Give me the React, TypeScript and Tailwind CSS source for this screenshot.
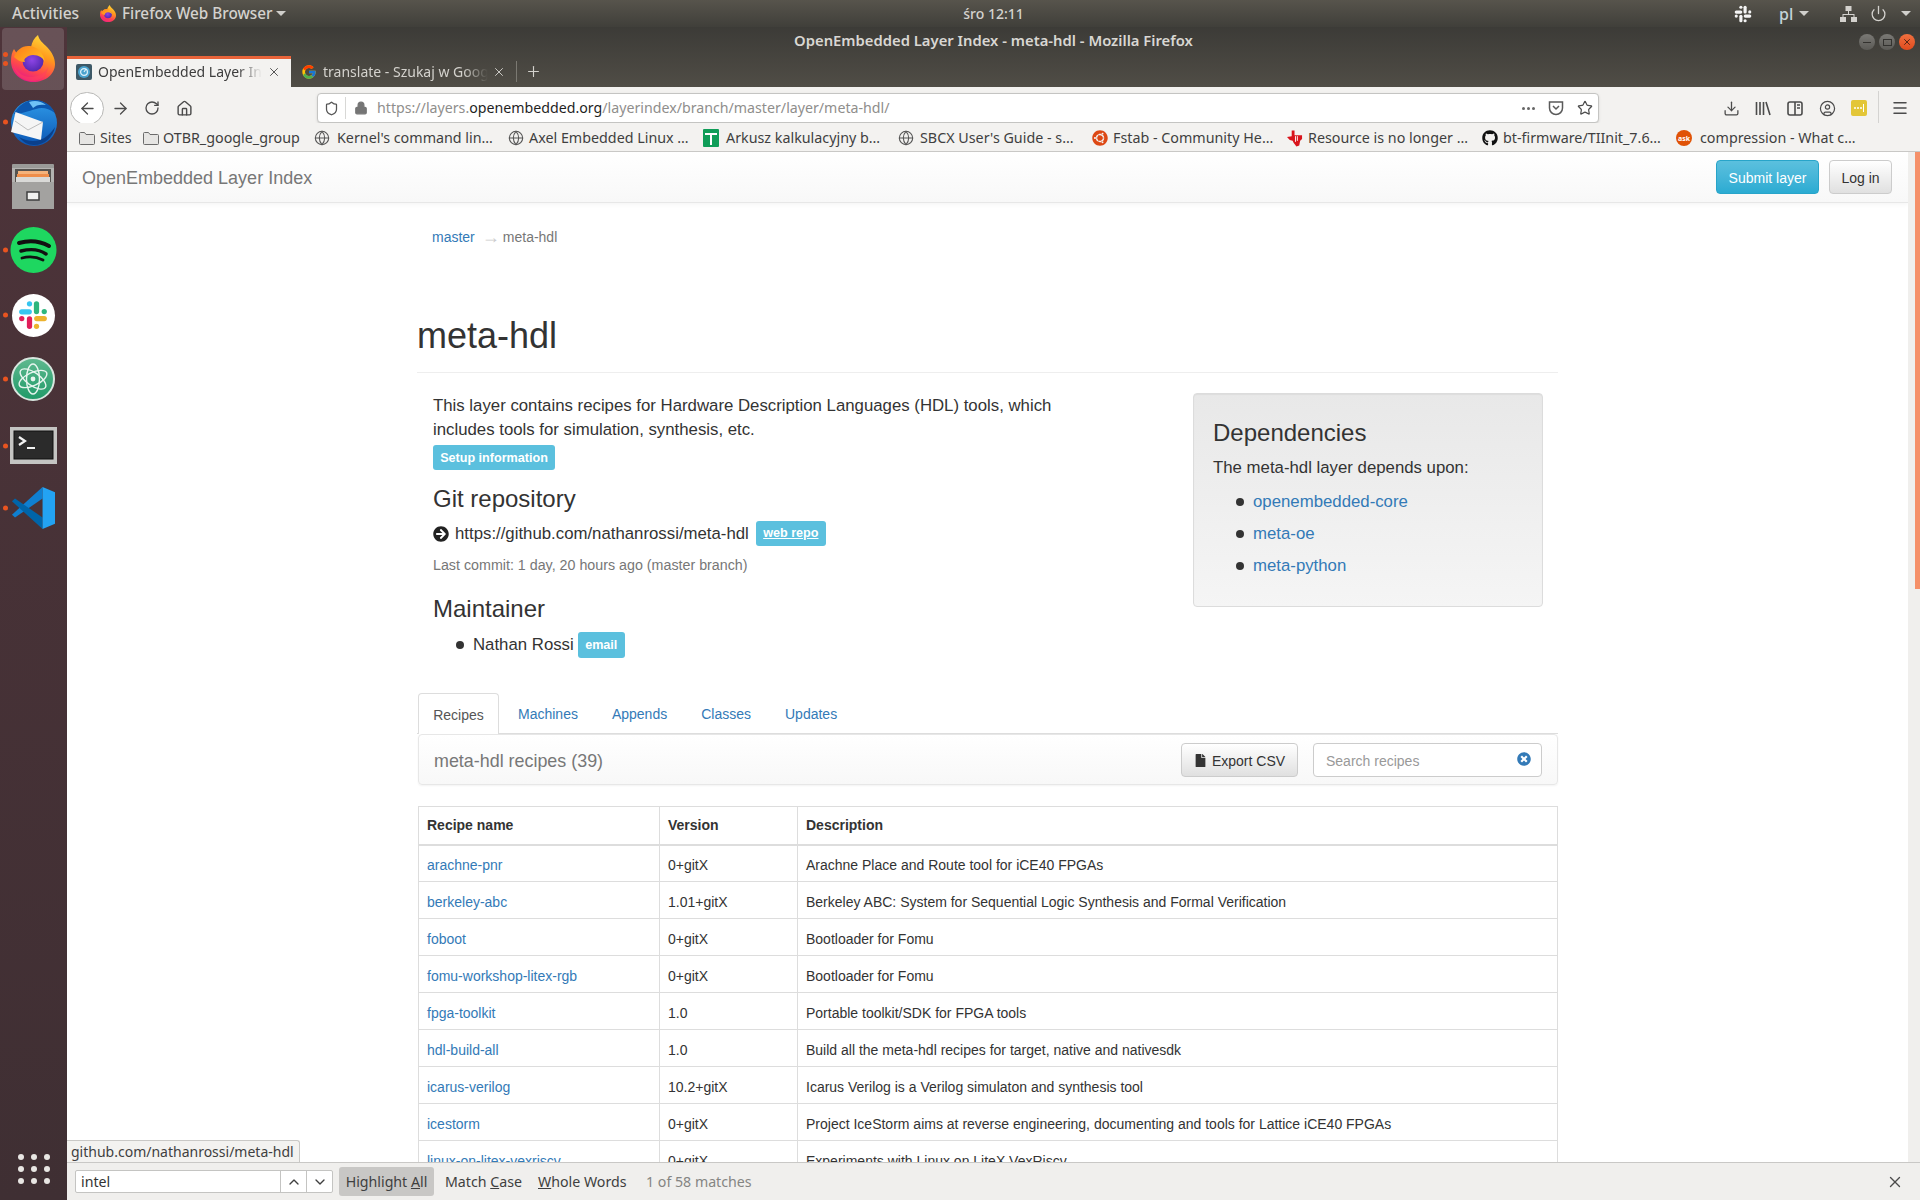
import React from "react";
import { ArrowLeft, ArrowRight, RotateCw, Home, Shield, Lock, Star, Download, Menu, X, Plus, Globe, ChevronUp, ChevronDown, Power, CircleUser } from "lucide-react";
import { FaGithub, FaUbuntu, FaArrowCircleRight, FaFile, FaTimesCircle } from "react-icons/fa";
import { FcGoogle } from "react-icons/fc";

const ui = "font-['Noto_Sans',sans-serif]";

function FirefoxLogo({ size }: { size: number }) {
  return (
    <svg width={size} height={size * 1.07} viewBox="0 0 44 47">
      <defs>
        <linearGradient id="ffa" x1="0.75" y1="0" x2="0.35" y2="1">
          <stop offset="0" stopColor="#ffdc3c" />
          <stop offset="0.4" stopColor="#ff9a1c" />
          <stop offset="0.72" stopColor="#ff4a4a" />
          <stop offset="1" stopColor="#e6178a" />
        </linearGradient>
        <radialGradient id="ffb" cx="0.45" cy="0.45" r="0.65">
          <stop offset="0" stopColor="#8e45e6" />
          <stop offset="1" stopColor="#4a24a8" />
        </radialGradient>
        <linearGradient id="ffc" x1="0" y1="0" x2="1" y2="0.6">
          <stop offset="0" stopColor="#ff7a1c" />
          <stop offset="1" stopColor="#ffb81f" />
        </linearGradient>
      </defs>
      <path d="M27 0c1 5 5 8 9 12 5 5 8 11 8 17 0 10-9 18-22 18C10 47 0 38 0 26c0-5 1-9 3-12 1 2 2 3 3 4 3-4 9-6 14-6 1-5 3-9 7-12z" fill="url(#ffa)" />
      <circle cx="22" cy="26" r="10.5" fill="url(#ffb)" />
      <path d="M3 22c2-7 9-12 16-11 7 1 13 6 15 16-2-4-6-7-12-7-3 0-5 1-6 2-3 2-3 3-2 5-4 0-8-2-11-5z" fill="url(#ffc)" />
      <path d="M2 27c2 9 9 15 18 15 8 0 14-4 17-10-1 9-8 14-16 14C10 46 3 38 2 27z" fill="#ff3f5f" opacity="0.55" />
    </svg>
  );
}

function Thunderbird() {
  return (
    <svg width="48" height="47" viewBox="0 0 48 47">
      <defs>
        <linearGradient id="tb" x1="0.5" y1="0" x2="0.5" y2="1">
          <stop offset="0" stopColor="#2f9ae8" />
          <stop offset="1" stopColor="#0a55b4" />
        </linearGradient>
      </defs>
      <circle cx="25" cy="24" r="23" fill="url(#tb)" />
      <path d="M5 15C9 6 18 0 28 1c8 1 15 6 18 13-7-5-13-6-19-4-8 2-15 5-22 5z" fill="#0c57ae" />
      <path d="M20 3c6-2 12-1 17 3-6-1-10 0-13 3-1-2-3-4-4-6z" fill="#6fc2f6" />
      <polygon points="6.5,13 34,23 32,41 2,33" fill="#f5f5f5" />
      <path d="M6 22l13 9 15-8" fill="none" stroke="#bdbdbd" strokeWidth="1" />
      <path d="M10 38c7 4 14 5 21 3 6-2 11-7 15-13-2 10-10 18-21 18-6 0-11-3-15-8z" fill="#0a3f8a" />
    </svg>
  );
}

function FilesIcon() {
  return (
    <svg width="44" height="46" viewBox="0 0 44 46">
      <rect x="1" y="1" width="42" height="6" rx="1" fill="#9a9a98" />
      <rect x="1" y="5" width="42" height="41" fill="#b4b3b1" />
      <rect x="4" y="6" width="36" height="13" fill="#55524f" />
      <rect x="7" y="8" width="30" height="3" fill="#f4b27b" />
      <rect x="6" y="11" width="32" height="3" fill="#ee8d4a" />
      <rect x="5" y="14" width="34" height="5" fill="#d9d9d7" />
      <rect x="1" y="19" width="42" height="27" fill="#a3a2a0" />
      <rect x="16" y="29" width="12" height="8" fill="#f1f1f0" stroke="#3f3f3f" strokeWidth="1.5" />
    </svg>
  );
}

function SpotifyIcon() {
  return (
    <svg width="47" height="46" viewBox="0 0 47 46">
      <circle cx="23.5" cy="23" r="23" fill="#1ed760" />
      <path d="M9 16c10-3 21-2 30 3" fill="none" stroke="#111" strokeWidth="4" strokeLinecap="round" />
      <path d="M11 24c8-2 18-2 25 3" fill="none" stroke="#111" strokeWidth="3.4" strokeLinecap="round" />
      <path d="M12 31c7-2 15-1 21 2" fill="none" stroke="#111" strokeWidth="2.8" strokeLinecap="round" />
    </svg>
  );
}

function SlackGlyph({ size, mono }: { size: number; mono?: string }) {
  const c = (x: string) => mono ?? x;
  return (
    <svg width={size} height={size} viewBox="0 0 24 24" fill="none" strokeLinecap="round" strokeWidth="4.2">
      <path d="M3 9.4h6" stroke={c("#36c5f0")} />
      <path d="M9.2 3h.01" stroke={c("#36c5f0")} />
      <path d="M14.8 3v6.2" stroke={c("#2eb67d")} />
      <path d="M21 9.2h.01" stroke={c("#2eb67d")} />
      <path d="M15 14.8h6" stroke={c("#ecb22e")} />
      <path d="M14.8 21h.01" stroke={c("#ecb22e")} />
      <path d="M9.2 15v6" stroke={c("#e01e5a")} />
      <path d="M3 14.8h.01" stroke={c("#e01e5a")} />
    </svg>
  );
}

function AtomIcon() {
  return (
    <svg width="44" height="44" viewBox="0 0 44 44">
      <defs>
        <linearGradient id="at" x1="0.5" y1="0" x2="0.5" y2="1">
          <stop offset="0" stopColor="#5fb98f" />
          <stop offset="1" stopColor="#1f9a68" />
        </linearGradient>
      </defs>
      <circle cx="22" cy="22" r="21" fill="url(#at)" stroke="#d8e6df" strokeWidth="2" />
      <g fill="none" stroke="#e8f5ef" strokeWidth="1.4">
        <ellipse cx="22" cy="22" rx="15" ry="6.5" transform="rotate(-25 22 22)" />
        <ellipse cx="22" cy="22" rx="15" ry="6.5" transform="rotate(35 22 22)" />
        <ellipse cx="22" cy="22" rx="15" ry="6.5" transform="rotate(90 22 22)" />
      </g>
      <circle cx="22" cy="22" r="2.4" fill="#e8f5ef" />
    </svg>
  );
}

function TerminalIcon() {
  return (
    <svg width="47" height="37" viewBox="0 0 47 37">
      <rect x="0" y="0" width="47" height="37" fill="#c4c4c2" />
      <rect x="4" y="4" width="39" height="28" fill="#2b2b2b" stroke="#111" />
      <path d="M9 10l6 4-6 4" fill="none" stroke="#f2f2f2" strokeWidth="2.2" />
      <path d="M17 21h8" stroke="#f2f2f2" strokeWidth="2" />
    </svg>
  );
}

function VSCode() {
  return (
    <svg width="46" height="44" viewBox="0 0 24 23">
      <polygon points="17,0.5 1,15 2.6,16.5 17,6.5" fill="#0f7fd0" />
      <polygon points="1,8 2.6,6.5 17,16.5 17,22.5" fill="#0065a9" />
      <polygon points="17,0.5 23.5,3.3 23.5,19.7 17,22.5" fill="#23a3f3" />
    </svg>
  );
}

function DockItem({ children, h, dots = 0, active }: { children: React.ReactNode; h: string; dots?: number; active?: boolean }) {
  return (
    <div className={`relative flex w-full items-center justify-center pr-[1px] ${h}`}>
      {active && <div className="absolute inset-y-0 left-[2px] right-[3px] rounded-[4px] bg-white/15" />}
      <div className="absolute left-[3px] top-1/2 flex -translate-y-1/2 flex-col gap-[4px]">
        {Array.from({ length: dots }).map((_, i) => (
          <div key={i} className="h-[5px] w-[5px] rounded-full bg-[#e95420]" />
        ))}
      </div>
      <div className="relative flex">{children}</div>
    </div>
  );
}

function Dock() {
  return (
    <div className="flex w-[67px] shrink-0 flex-col items-center bg-gradient-to-b from-[#4e343a] to-[#3f2f33] pt-[1px]">
      <DockItem h="h-[62px]" dots={2} active>
        <FirefoxLogo size={44} />
      </DockItem>
      <div className="h-[6px]" />
      <DockItem h="h-[52px]" dots={1}>
        <Thunderbird />
      </DockItem>
      <div className="h-[13px]" />
      <DockItem h="h-[50px]">
        <FilesIcon />
      </DockItem>
      <div className="h-[16px]" />
      <DockItem h="h-[46px]" dots={1}>
        <SpotifyIcon />
      </DockItem>
      <div className="h-[20px]" />
      <DockItem h="h-[44px]" dots={1}>
        <div className="flex h-[43px] w-[43px] items-center justify-center rounded-full bg-white">
          <SlackGlyph size={30} />
        </div>
      </DockItem>
      <div className="h-[20px]" />
      <DockItem h="h-[44px]" dots={1}>
        <AtomIcon />
      </DockItem>
      <div className="h-[26px]" />
      <DockItem h="h-[37px]" dots={1}>
        <TerminalIcon />
      </DockItem>
      <div className="h-[22px]" />
      <DockItem h="h-[44px]" dots={1}>
        <VSCode />
      </DockItem>
      <div className="mt-auto mb-[16px] grid grid-cols-3 gap-x-[7px] gap-y-[6px]">
        {Array.from({ length: 9 }).map((_, i) => (
          <div key={i} className="h-[6px] w-[6px] rounded-full bg-[#e8e6e3]" />
        ))}
      </div>
    </div>
  );
}

function Caret() {
  return <div className="h-0 w-0 border-x-[5px] border-t-[5px] border-x-transparent border-t-[#d0cfcb]" />;
}

function TopBar() {
  return (
    <div className={`flex h-[27px] shrink-0 items-center bg-gradient-to-b from-[#57544c] to-[#403f3a] text-[14px] font-medium text-[#d4d2ce] ${ui}`}>
      <div className="ml-[12px] w-[88px] text-[15.6px]">Activities</div>
      <FirefoxLogo size={16} />
      <div className="ml-[6px] w-[154px] whitespace-nowrap text-[15.3px]">Firefox Web Browser</div>
      <Caret />
      <div className="ml-[677px] w-[61px] whitespace-nowrap text-center">śro 12:11</div>
      <div className="ml-[710px]">
        <SlackGlyph size={18} mono="#f4f4f4" />
      </div>
      <div className="ml-[27px] w-[20px] text-[16px] text-[#c5d3d8]">pl</div>
      <Caret />
      <svg className="ml-[31px]" width="17" height="16" viewBox="0 0 17 16" fill="#d4d2ce">
        <rect x="5.5" y="0" width="6" height="5" />
        <rect x="0" y="11" width="6" height="5" />
        <rect x="11" y="11" width="6" height="5" />
        <path d="M8 5h1v3h5.5v3h-1V9h-10v2h-1V8H8z" />
      </svg>
      <Power className="ml-[13px] text-[#d4d2ce]" size={17} strokeWidth={1.8} />
      <div className="ml-[14px]">
        <Caret />
      </div>
    </div>
  );
}

function WinBtn({ children, close }: { children: React.ReactNode; close?: boolean }) {
  return (
    <div
      className={`flex h-[16px] w-[16px] items-center justify-center rounded-full ${
        close ? "bg-gradient-to-b from-[#f0703f] to-[#df4a1c]" : "bg-gradient-to-b from-[#7a7975] to-[#5b5a56]"
      }`}
    >
      {children}
    </div>
  );
}

function TitleBar() {
  return (
    <div className={`grid h-[29px] grid-cols-[1fr_auto_1fr] items-center ${ui}`}>
      <div />
      <div className="whitespace-nowrap pb-[3px] text-[14.8px] font-semibold text-[#d9d7d3]">OpenEmbedded Layer Index - meta-hdl - Mozilla Firefox</div>
      <div className="flex justify-end gap-[4px] pr-[5px] pt-[1px]">
        <WinBtn>
          <div className="h-[1px] w-[8px] bg-[#33322f]" />
        </WinBtn>
        <WinBtn>
          <div className="h-[7px] w-[9px] border border-[#33322f]" />
        </WinBtn>
        <WinBtn close>
          <X size={10} className="text-[#3a1a10]" strokeWidth={2} />
        </WinBtn>
      </div>
    </div>
  );
}

function OEFavicon() {
  return (
    <svg width="16" height="16" viewBox="0 0 16 16">
      <rect width="16" height="16" rx="2" fill="#3d5866" />
      <circle cx="8" cy="8" r="6" fill="#4aa3cf" />
      <circle cx="8" cy="8" r="3.4" fill="none" stroke="#dff1fa" strokeWidth="1.2" />
      <path d="M8 8l2-3" stroke="#dff1fa" strokeWidth="1.2" />
    </svg>
  );
}

function TabStrip() {
  return (
    <div className={`flex h-[31px] items-stretch text-[14px] ${ui}`}>
      <div className="flex w-[224px] items-center border-t-[3px] border-[#e9643a] bg-[#f3f2f0] pb-[3px] pl-[9px] text-[#3d3d3d]">
        <OEFavicon />
        <div className="ml-[6px] w-[164px] overflow-hidden whitespace-nowrap [mask-image:linear-gradient(to_right,black_85%,transparent)]">OpenEmbedded Layer Index</div>
        <X size={14} className="ml-[5px] text-[#4a4a4a]" strokeWidth={1.6} />
      </div>
      <div className="flex w-[225px] items-center pl-[10px] text-[#d4d2cd]">
        <FcGoogle size={16} />
        <div className="ml-[6px] w-[165px] overflow-hidden whitespace-nowrap [mask-image:linear-gradient(to_right,black_85%,transparent)]">translate - Szukaj w Google</div>
        <X size={14} className="ml-[4px] text-[#d4d2cd]" strokeWidth={1.6} />
      </div>
      <div className="my-[5px] w-px bg-[#7b7972]" />
      <div className="flex w-[32px] items-center justify-center text-[#d4d2cd]">
        <Plus size={17} strokeWidth={1.6} />
      </div>
    </div>
  );
}

function ToolBtn({ children }: { children: React.ReactNode }) {
  return <div className="flex h-[32px] w-[32px] shrink-0 items-center justify-center text-[#4b4b4b]">{children}</div>;
}

function Toolbar() {
  return (
    <div className={`flex h-[36px] items-center bg-[#f3f2f0] pl-[3px] pt-[6px] ${ui}`}>
      <div className="flex h-[33px] w-[34px] shrink-0 items-center justify-center rounded-full border border-[#b8b8b6] bg-white text-[#4b4b4b]">
        <ArrowLeft size={19} strokeWidth={1.6} />
      </div>
      <ToolBtn>
        <ArrowRight size={19} strokeWidth={1.6} />
      </ToolBtn>
      <ToolBtn>
        <RotateCw size={16} strokeWidth={2} />
      </ToolBtn>
      <ToolBtn>
        <Home size={17} strokeWidth={2} />
      </ToolBtn>
      <div className="ml-[117px] flex h-[30px] w-[1282px] shrink-0 items-center rounded-[4px] border border-[#c4c4c2] bg-white pl-[6px] pr-[5px] shadow-sm">
        <Shield size={15} className="text-[#555]" strokeWidth={2} />
        <div className="ml-[6px] h-[22px] w-px bg-[#d8d8d6]" />
        <Lock size={14} fill="#757575" className="ml-[8px] text-[#757575]" strokeWidth={2} />
        <div className="ml-[9px] whitespace-nowrap text-[14.2px] text-[#8f8e8c]">
          https://layers.<span className="text-[#1f1f1f]">openembedded.org</span>/layerindex/branch/master/layer/meta-hdl/
        </div>
        <div className="ml-auto flex gap-[2px]">
          <div className="h-[3px] w-[3px] rounded-full bg-[#666]" />
          <div className="h-[3px] w-[3px] rounded-full bg-[#666]" />
          <div className="h-[3px] w-[3px] rounded-full bg-[#666]" />
        </div>
        <svg className="ml-[13px]" width="16" height="16" viewBox="0 0 16 16" fill="none" stroke="#5a5a5a" strokeWidth="1.5">
          <path d="M1.5 2h13v6a6.5 6.5 0 0 1-13 0z" />
          <path d="M5 6l3 3 3-3" />
        </svg>
        <Star size={16} className="ml-[13px] text-[#4b4b4b]" strokeWidth={1.8} />
      </div>
      <div className="ml-[116px] flex">
        <ToolBtn>
          <Download size={17} strokeWidth={1.8} />
        </ToolBtn>
        <ToolBtn>
          <svg width="16" height="15" viewBox="0 0 16 15" fill="none" stroke="#4b4b4b" strokeWidth="1.6">
            <path d="M1.5 1v13M5 1v13M8.5 1v13M11 1l4 13" />
          </svg>
        </ToolBtn>
        <ToolBtn>
          <svg width="16" height="15" viewBox="0 0 16 15" fill="none" stroke="#4b4b4b" strokeWidth="1.6">
            <rect x="1" y="1" width="14" height="13" rx="2" />
            <path d="M8 1v13" />
            <path d="M10 4h3M10 7h3" />
          </svg>
        </ToolBtn>
        <ToolBtn>
          <CircleUser size={17} strokeWidth={1.7} />
        </ToolBtn>
        <ToolBtn>
          <div className="flex h-[16px] w-[16px] items-center justify-center gap-[1px] rounded-[2px] bg-[#e3c637]">
            <div className="h-[2px] w-[2px] rounded-full bg-white" />
            <div className="h-[2px] w-[2px] rounded-full bg-white" />
            <div className="h-[2px] w-[2px] rounded-full bg-white" />
            <div className="h-[8px] w-[1px] bg-white" />
          </div>
        </ToolBtn>
      </div>
      <div className="ml-[3px] h-[34px] w-px bg-[#d4d3d1]" />
      <div className="ml-[5px]">
        <ToolBtn>
          <Menu size={18} strokeWidth={2} />
        </ToolBtn>
      </div>
    </div>
  );
}

function FolderIcon() {
  return (
    <svg width="16" height="14" viewBox="0 0 16 14" fill="#e6e5e3" stroke="#6b6b6b" strokeWidth="1">
      <path d="M.5 2.5a1 1 0 0 1 1-1h4l1.5 2h7.5a1 1 0 0 1 1 1v8a1 1 0 0 1-1 1h-13a1 1 0 0 1-1-1z" />
    </svg>
  );
}

function SheetsIcon() {
  return (
    <svg width="16" height="18" viewBox="0 0 16 18">
      <rect width="16" height="18" rx="1" fill="#0f9d58" />
      <path d="M2 5h12M8 5v11" stroke="#fff" strokeWidth="2" />
    </svg>
  );
}

function TIIcon() {
  return (
    <svg width="17" height="17" viewBox="0 0 17 17">
      <path d="M5 0h3v5h8v4l-2 2-1 5-3 1-3-4-1-2-3-1-3-3 5-1z" fill="#d9141c" />
      <path d="M9 6v6M11 6v5" stroke="#fff" strokeWidth="1" />
    </svg>
  );
}

function AskIcon() {
  return (
    <div className="relative flex h-[16px] w-[16px] items-center justify-center rounded-full bg-[#e05206] text-[7px] font-bold leading-none text-white">
      ask
    </div>
  );
}

const bookmarks: { w: string; g: string; icon: React.ReactNode; text: string }[] = [
  { w: "w-[64px]", g: "gap-[5px]", icon: <FolderIcon />, text: "Sites" },
  { w: "w-[171px]", g: "gap-[4px]", icon: <FolderIcon />, text: "OTBR_google_group" },
  { w: "w-[194px]", g: "gap-[7px]", icon: <Globe size={16} className="text-[#555]" strokeWidth={1.6} />, text: "Kernel's command lin…" },
  { w: "w-[195px]", g: "gap-[5px]", icon: <Globe size={16} className="text-[#555]" strokeWidth={1.6} />, text: "Axel Embedded Linux …" },
  { w: "w-[195px]", g: "gap-[7px]", icon: <SheetsIcon />, text: "Arkusz kalkulacyjny b…" },
  { w: "w-[194px]", g: "gap-[6px]", icon: <Globe size={16} className="text-[#555]" strokeWidth={1.6} />, text: "SBCX User's Guide - s…" },
  { w: "w-[195px]", g: "gap-[5px]", icon: <FaUbuntu size={16} className="text-[#dd4814]" />, text: "Fstab - Community He…" },
  { w: "w-[195px]", g: "gap-[5px]", icon: <TIIcon />, text: "Resource is no longer …" },
  { w: "w-[194px]", g: "gap-[5px]", icon: <FaGithub size={16} className="text-[#111]" />, text: "bt-firmware/TIInit_7.6…" },
  { w: "w-[195px]", g: "gap-[8px]", icon: <AskIcon />, text: "compression - What c…" },
];

function Bookmarks() {
  return (
    <div className={`flex h-[29px] items-center border-b border-[#c9c8c6] bg-[#f3f2f0] pl-[12px] pt-[2px] text-[14.3px] text-[#3f3f3f] ${ui}`}>
      {bookmarks.map((b) => (
        <div key={b.text} className={`flex shrink-0 items-center ${b.w} ${b.g}`}>
          <div className="flex w-[16px] shrink-0 justify-center">{b.icon}</div>
          <div className="whitespace-nowrap">{b.text}</div>
        </div>
      ))}
    </div>
  );
}

function Badge({ children, cls = "" }: { children: React.ReactNode; cls?: string }) {
  return (
    <div className={`inline-flex items-center justify-center rounded-[3px] bg-[#5bc0de] text-[12.6px] font-bold text-white ${cls}`}>{children}</div>
  );
}

function Bullet({ children, gap = "gap-[9px]" }: { children: React.ReactNode; gap?: string }) {
  return (
    <div className={`flex items-center ${gap}`}>
      <div className="h-[8px] w-[8px] shrink-0 rounded-full bg-[#333]" />
      {children}
    </div>
  );
}

const recipes = [
  ["arachne-pnr", "0+gitX", "Arachne Place and Route tool for iCE40 FPGAs"],
  ["berkeley-abc", "1.01+gitX", "Berkeley ABC: System for Sequential Logic Synthesis and Formal Verification"],
  ["foboot", "0+gitX", "Bootloader for Fomu"],
  ["fomu-workshop-litex-rgb", "0+gitX", "Bootloader for Fomu"],
  ["fpga-toolkit", "1.0", "Portable toolkit/SDK for FPGA tools"],
  ["hdl-build-all", "1.0", "Build all the meta-hdl recipes for target, native and nativesdk"],
  ["icarus-verilog", "10.2+gitX", "Icarus Verilog is a Verilog simulaton and synthesis tool"],
  ["icestorm", "0+gitX", "Project IceStorm aims at reverse engineering, documenting and tools for Lattice iCE40 FPGAs"],
  ["linux-on-litex-vexriscv", "0+gitX", "Experiments with Linux on LiteX VexRiscv"],
];

function Navbar() {
  return (
    <div className="flex h-[51px] shrink-0 items-center justify-between border-b border-[#e7e7e7] bg-gradient-to-b from-white to-[#f8f8f8] pl-[15px] pr-[16px] shadow-[0_1px_5px_rgba(0,0,0,0.05)]">
      <div className="pt-[2px] text-[18px] text-[#777]">OpenEmbedded Layer Index</div>
      <div className="flex gap-[10px]">
        <div className="flex h-[34px] w-[103px] items-center justify-center rounded-[4px] border border-[#28a4c9] bg-gradient-to-b from-[#5bc0de] to-[#2aabd2] pt-[2px] text-[14px] text-white">Submit layer</div>
        <div className="flex h-[34px] w-[63px] items-center justify-center rounded-[4px] border border-[#ccc] bg-gradient-to-b from-white to-[#e0e0e0] pt-[2px] text-[14px] text-[#333]">Log in</div>
      </div>
    </div>
  );
}

function LayerInfo() {
  return (
    <div className="mt-[20px] flex items-start">
      <div className="w-[776px] shrink-0 pl-[16px] pt-[1px]">
        <p className="text-[16.8px] leading-[24px]">
          This layer contains recipes for Hardware Description Languages (HDL) tools, which
          <br />
          includes tools for simulation, synthesis, etc.
        </p>
        <Badge cls="mt-[3px] flex h-[25px] w-[122px] pt-[1px]">Setup information</Badge>
        <h3 className="mt-[16px] text-[24px] leading-[26px]">Git repository</h3>
        <div className="mt-[9px] flex h-[25px] items-center">
          <FaArrowCircleRight size={16} className="mr-[6px] text-[#222]" />
          <span className="text-[16.8px]">https://github.com/nathanrossi/meta-hdl</span>
          <Badge cls="ml-[7px] h-[25px] w-[70px] underline">web repo</Badge>
        </div>
        <div className="mt-[9px] text-[14.28px] leading-[20px] text-[#777]">Last commit: 1 day, 20 hours ago (master branch)</div>
        <h3 className="mt-[21px] text-[24px] leading-[26px]">Maintainer</h3>
        <div className="mt-[10px] flex h-[26px] items-center pl-[23px]">
          <Bullet>
            <span className="text-[16.8px]">Nathan Rossi</span>
          </Bullet>
          <Badge cls="ml-[4px] h-[26px] w-[47px]">email</Badge>
        </div>
      </div>
      <div className="h-[214px] w-[350px] shrink-0 rounded-[4px] border border-[#dcdcdc] bg-gradient-to-b from-[#e8e8e8] to-[#f5f5f5] pl-[19px] pt-[26px] shadow-[inset_0_1px_1px_rgba(0,0,0,0.05)]">
        <h3 className="text-[24px] leading-[26px]">Dependencies</h3>
        <p className="mt-[10px] text-[16.8px] leading-[24px]">The meta-hdl layer depends upon:</p>
        <div className="mt-[10px] flex flex-col gap-[8px] pl-[23px] text-[16.8px] leading-[24px] text-[#337ab7]">
          <Bullet>openembedded-core</Bullet>
          <Bullet>meta-oe</Bullet>
          <Bullet>meta-python</Bullet>
        </div>
      </div>
    </div>
  );
}

function Tabs() {
  return (
    <div className="mt-[35px] flex h-[41px] border-b border-[#ddd] pl-px text-[14px] text-[#337ab7]">
      <div className="mr-[2px] flex h-[41px] w-[81px] items-center justify-center rounded-t-[4px] border border-b-0 border-[#ddd] bg-white pt-[3px] text-[#555]">Recipes</div>
      <div className="flex h-[40px] items-center gap-[34px] pl-[17px] pt-[3px]">
        <span>Machines</span>
        <span>Appends</span>
        <span>Classes</span>
        <span>Updates</span>
      </div>
    </div>
  );
}

function PanelBar() {
  return (
    <div className="ml-px flex h-[51px] items-center justify-between rounded-[4px] border border-[#e7e7e7] bg-gradient-to-b from-white to-[#f8f8f8] pl-[15px] pr-[15px] shadow-[0_1px_2px_rgba(0,0,0,0.05)]">
      <div className="pt-[3px] text-[17.9px] text-[#777]">meta-hdl recipes (39)</div>
      <div className="flex items-center gap-[15px]">
        <div className="flex h-[34px] w-[117px] items-center justify-center gap-[5px] rounded-[4px] border border-[#ccc] bg-gradient-to-b from-white to-[#e0e0e0] pt-[3px] text-[14px] text-[#333]">
          <FaFile size={13} className="mb-[2px]" />
          Export CSV
        </div>
        <div className="flex h-[34px] w-[229px] items-center justify-between rounded-[4px] border border-[#ccc] bg-white pl-[12px] pr-[10px] pt-[3px] text-[14px] text-[#999]">
          Search recipes
          <FaTimesCircle size={14} className="mb-[4px] text-[#337ab7]" />
        </div>
      </div>
    </div>
  );
}

function RecipeTable() {
  return (
    <table className="mt-[21px] ml-px w-[1140px] table-fixed border-collapse border border-[#ddd] text-[14px]">
      <colgroup>
        <col className="w-[241px]" />
        <col className="w-[138px]" />
        <col />
      </colgroup>
      <thead>
        <tr className="h-[38px] border-b-2 border-[#ddd] text-left font-bold">
          <th className="border-x border-[#ddd] px-[8px] pt-[1px]">Recipe name</th>
          <th className="border-x border-[#ddd] px-[8px] pt-[1px]">Version</th>
          <th className="border-x border-[#ddd] px-[8px] pt-[1px]">Description</th>
        </tr>
      </thead>
      <tbody>
        {recipes.map((r) => (
          <tr key={r[0]} className="h-[37px] border-b border-[#ddd]">
            <td className="border-x border-[#ddd] px-[8px] pt-[4px] text-[#337ab7]">{r[0]}</td>
            <td className="border-x border-[#ddd] px-[8px] pt-[4px]">{r[1]}</td>
            <td className="border-x border-[#ddd] px-[8px] pt-[4px]">{r[2]}</td>
          </tr>
        ))}
      </tbody>
    </table>
  );
}

function Content() {
  return (
    <div className="relative flex min-h-0 flex-1 overflow-hidden">
      <div className="w-[1841px] shrink-0 overflow-hidden bg-white font-['Liberation_Sans',sans-serif] text-[#333]">
        <Navbar />
        <div className="ml-[350px] w-[1141px]">
          <div className="mt-[24px] flex h-[20px] items-center pl-[15px] text-[14px] leading-[20px] text-[#777]">
            <span className="text-[#337ab7]">master</span>
            <span className="ml-[7px] text-[18px] leading-[20px] text-[#ccc]">→</span>
            <span className="ml-[3px]">meta-hdl</span>
          </div>
          <h1 className="mt-[69px] border-b border-[#eee] pb-[16px] text-[36px] leading-[40px]">meta-hdl</h1>
          <LayerInfo />
          <Tabs />
          <PanelBar />
          <RecipeTable />
        </div>
      </div>
      <div className="flex w-[12px] shrink-0 justify-end bg-[#f0efed]">
        <div className="h-[437px] w-[5px] bg-[#f59069]" />
      </div>
      <div className={`absolute bottom-0 left-0 flex h-[22px] w-[233px] items-center rounded-tr-[3px] border-r border-t border-[#c9c8c6] bg-[#f3f2f0] pl-[4px] text-[14px] text-[#3f3f3f] ${ui}`}>
        github.com/nathanrossi/meta-hdl
      </div>
    </div>
  );
}

function FindBar() {
  return (
    <div className={`flex h-[38px] shrink-0 items-center border-t border-[#c9c8c6] bg-[#f0efed] text-[14.2px] text-[#3f3f3f] ${ui}`}>
      <div className="ml-[8px] flex h-[23px] w-[258px] items-center rounded-[2px] border border-[#c4c4c2] bg-white">
        <div className="w-[204px] pl-[5px] text-[#333]">intel</div>
        <div className="flex h-full w-[26px] items-center justify-center border-l border-[#c4c4c2]">
          <ChevronUp size={16} strokeWidth={2} />
        </div>
        <div className="flex h-full w-[26px] items-center justify-center border-l border-[#c4c4c2]">
          <ChevronDown size={16} strokeWidth={2} />
        </div>
      </div>
      <div className="ml-[6px] flex h-[29px] w-[95px] items-center justify-center rounded-[3px] bg-[#c8c7c5] whitespace-nowrap">
        <span>
          Highlight <u>A</u>ll
        </span>
      </div>
      <div className="ml-[11px] w-[93px] whitespace-nowrap">
        Match <u>C</u>ase
      </div>
      <div className="w-[108px] whitespace-nowrap">
        <u>W</u>hole Words
      </div>
      <div className="whitespace-nowrap text-[#858583]">1 of 58 matches</div>
      <X size={18} className="ml-auto mr-[16px] text-[#4b4b4b]" strokeWidth={1.8} />
    </div>
  );
}

export default function App() {
  return (
    <div className="flex h-[1200px] w-[1920px] flex-col overflow-hidden">
      <TopBar />
      <div className="flex min-h-0 flex-1 bg-gradient-to-b from-[#3c3b37] via-[#504d46] to-[#504d46]">
        <Dock />
        <div className="flex min-w-0 flex-1 flex-col">
          <div className="shrink-0 bg-gradient-to-b from-[#3c3b37] to-[#504d46]">
            <TitleBar />
            <TabStrip />
          </div>
          <Toolbar />
          <Bookmarks />
          <Content />
          <FindBar />
        </div>
      </div>
    </div>
  );
}
